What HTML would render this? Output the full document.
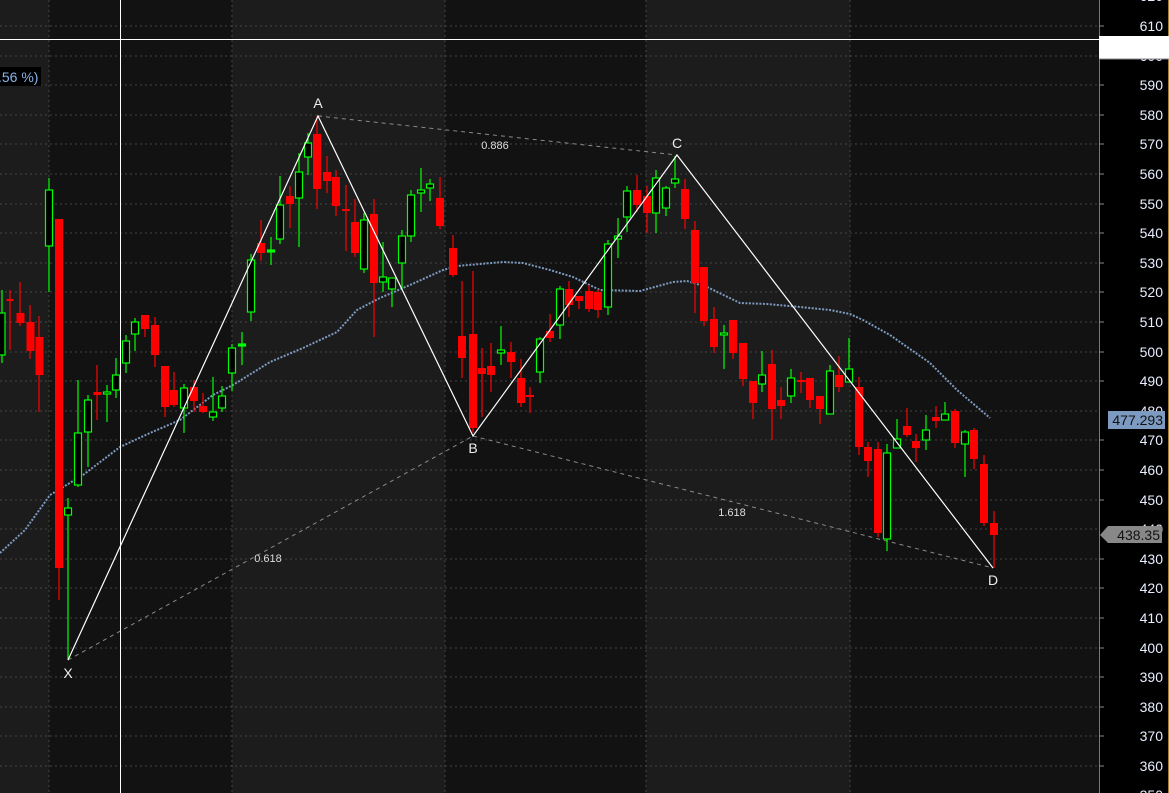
<!DOCTYPE html>
<html><head><meta charset="utf-8"><style>
html,body{margin:0;padding:0;background:#1c1c1c;width:1169px;height:793px;overflow:hidden}
svg{display:block}
text{font-family:"Liberation Sans",sans-serif}
</style></head><body>
<svg width="1169" height="793" viewBox="0 0 1169 793" xmlns="http://www.w3.org/2000/svg">
<rect x="0" y="0" width="1099" height="793" fill="#1c1c1c"/>
<rect x="49" y="0" width="183" height="793" fill="#121212"/>
<rect x="445" y="0" width="201" height="793" fill="#121212"/>
<rect x="850" y="0" width="249" height="793" fill="#121212"/>
<g stroke="#444" stroke-width="1" stroke-dasharray="2,3">
<line x1="0" y1="26" x2="1099" y2="26"/><line x1="0" y1="56" x2="1099" y2="56"/><line x1="0" y1="85" x2="1099" y2="85"/><line x1="0" y1="115" x2="1099" y2="115"/><line x1="0" y1="144" x2="1099" y2="144"/><line x1="0" y1="174" x2="1099" y2="174"/><line x1="0" y1="204" x2="1099" y2="204"/><line x1="0" y1="233" x2="1099" y2="233"/><line x1="0" y1="263" x2="1099" y2="263"/><line x1="0" y1="292" x2="1099" y2="292"/><line x1="0" y1="322" x2="1099" y2="322"/><line x1="0" y1="352" x2="1099" y2="352"/><line x1="0" y1="381" x2="1099" y2="381"/><line x1="0" y1="411" x2="1099" y2="411"/><line x1="0" y1="440" x2="1099" y2="440"/><line x1="0" y1="470" x2="1099" y2="470"/><line x1="0" y1="500" x2="1099" y2="500"/><line x1="0" y1="529" x2="1099" y2="529"/><line x1="0" y1="559" x2="1099" y2="559"/><line x1="0" y1="588" x2="1099" y2="588"/><line x1="0" y1="618" x2="1099" y2="618"/><line x1="0" y1="648" x2="1099" y2="648"/><line x1="0" y1="677" x2="1099" y2="677"/><line x1="0" y1="707" x2="1099" y2="707"/><line x1="0" y1="736" x2="1099" y2="736"/><line x1="0" y1="766" x2="1099" y2="766"/>
<line x1="49" y1="0" x2="49" y2="793"/><line x1="232" y1="0" x2="232" y2="793"/><line x1="445" y1="0" x2="445" y2="793"/><line x1="646" y1="0" x2="646" y2="793"/><line x1="850" y1="0" x2="850" y2="793"/>
</g>
<polyline fill="none" stroke="#7d9ac0" stroke-width="2" stroke-dasharray="2,1.5" points="0,553 25,530 50,495 83,475 120,447 150,433 180,420 213,395 233,385 270,362 303,348 337,332 357,310 380,298 410,285 443,270 457,266 503,262 523,263 550,270 573,277 600,290 640,291 673,282 687,281 707,287 740,303 767,304 800,307 830,310 850,314 863,320 890,335 930,363 957,390 990,418"/>
<g stroke="#8a8a8a" stroke-width="1" stroke-dasharray="4,4" fill="none">
<line x1="68" y1="660" x2="473" y2="436"/><line x1="318" y1="116" x2="677" y2="155"/><line x1="473" y1="436" x2="993" y2="568"/>
</g>
<g stroke-width="1.2">
<line x1="2" y1="290" x2="2" y2="363" stroke="#0f0"/><rect x="-2" y="313" width="7" height="42" fill="#000" stroke="#0f0"/>
<line x1="10" y1="290" x2="10" y2="350" stroke="#f00"/><rect x="6.5" y="299" width="7" height="2" fill="#f00"/>
<line x1="20" y1="282" x2="20" y2="326" stroke="#f00"/><rect x="16.5" y="313" width="8" height="10" fill="#f00"/>
<line x1="30" y1="305" x2="30" y2="359" stroke="#f00"/><rect x="26.5" y="322" width="8" height="29" fill="#f00"/>
<line x1="39" y1="316" x2="39" y2="412" stroke="#f00"/><rect x="35.5" y="337" width="8" height="38" fill="#f00"/>
<line x1="49" y1="178" x2="49" y2="292" stroke="#0f0"/><rect x="45.5" y="190" width="7" height="56" fill="#000" stroke="#0f0"/>
<line x1="59" y1="219" x2="59" y2="600" stroke="#f00"/><rect x="55" y="219" width="8" height="349" fill="#f00"/>
<line x1="68" y1="498" x2="68" y2="660" stroke="#0f0"/><rect x="64.5" y="508" width="7" height="7" fill="#000" stroke="#0f0"/>
<line x1="78" y1="380" x2="78" y2="487" stroke="#0f0"/><rect x="74.5" y="433" width="7" height="52" fill="#000" stroke="#0f0"/>
<line x1="88" y1="395" x2="88" y2="467" stroke="#0f0"/><rect x="84.5" y="400" width="7" height="32" fill="#000" stroke="#0f0"/>
<line x1="97" y1="365" x2="97" y2="420" stroke="#f00"/><rect x="93.5" y="392" width="8" height="3" fill="#f00"/>
<line x1="107" y1="385" x2="107" y2="422" stroke="#0f0"/><rect x="103.5" y="392" width="7" height="2" fill="#000" stroke="#0f0"/>
<line x1="116" y1="358" x2="116" y2="398" stroke="#0f0"/><rect x="112.5" y="375" width="7" height="15" fill="#000" stroke="#0f0"/>
<line x1="126" y1="335" x2="126" y2="373" stroke="#0f0"/><rect x="122.5" y="341" width="7" height="22" fill="#000" stroke="#0f0"/>
<line x1="135" y1="318" x2="135" y2="351" stroke="#0f0"/><rect x="131.5" y="322" width="7" height="12" fill="#000" stroke="#0f0"/>
<line x1="145" y1="315" x2="145" y2="337" stroke="#f00"/><rect x="141" y="315" width="8" height="14" fill="#f00"/>
<line x1="155" y1="317" x2="155" y2="367" stroke="#f00"/><rect x="151" y="325" width="8" height="30" fill="#f00"/>
<line x1="165" y1="366" x2="165" y2="417" stroke="#f00"/><rect x="161" y="366" width="8" height="41" fill="#f00"/>
<line x1="174" y1="372" x2="174" y2="407" stroke="#f00"/><rect x="170" y="390" width="8" height="15" fill="#f00"/>
<line x1="184" y1="384" x2="184" y2="433" stroke="#0f0"/><rect x="180.5" y="388" width="7" height="20" fill="#000" stroke="#0f0"/>
<line x1="194" y1="380" x2="194" y2="412" stroke="#f00"/><rect x="190" y="387" width="8" height="14" fill="#f00"/>
<line x1="203" y1="393" x2="203" y2="413" stroke="#f00"/><rect x="199" y="406" width="8" height="6" fill="#f00"/>
<line x1="213" y1="377" x2="213" y2="421" stroke="#0f0"/><rect x="209.5" y="412" width="7" height="5" fill="#000" stroke="#0f0"/>
<line x1="222" y1="386" x2="222" y2="412" stroke="#0f0"/><rect x="218.5" y="396" width="7" height="12" fill="#000" stroke="#0f0"/>
<line x1="232" y1="344" x2="232" y2="391" stroke="#0f0"/><rect x="228.5" y="348" width="7" height="25" fill="#000" stroke="#0f0"/>
<line x1="242" y1="332" x2="242" y2="365" stroke="#0f0"/><rect x="238.5" y="344" width="7" height="2" fill="#0f0" stroke="#0f0"/>
<line x1="251" y1="254" x2="251" y2="321" stroke="#0f0"/><rect x="247.5" y="260" width="7" height="52" fill="#000" stroke="#0f0"/>
<line x1="261" y1="220" x2="261" y2="261" stroke="#f00"/><rect x="257" y="243" width="8" height="10" fill="#f00"/>
<line x1="271" y1="237" x2="271" y2="265" stroke="#0f0"/><rect x="267.5" y="250" width="7" height="2" fill="#0f0" stroke="#0f0"/>
<line x1="280" y1="176" x2="280" y2="244" stroke="#0f0"/><rect x="276.5" y="205" width="7" height="34" fill="#000" stroke="#0f0"/>
<line x1="290" y1="186" x2="290" y2="228" stroke="#f00"/><rect x="286" y="196" width="8" height="8" fill="#f00"/>
<line x1="299" y1="153" x2="299" y2="247" stroke="#0f0"/><rect x="295.5" y="172" width="7" height="26" fill="#000" stroke="#0f0"/>
<line x1="308" y1="133" x2="308" y2="175" stroke="#0f0"/><rect x="304.5" y="143" width="7" height="14" fill="#000" stroke="#0f0"/>
<line x1="317" y1="116" x2="317" y2="209" stroke="#f00"/><rect x="313" y="134" width="8" height="55" fill="#f00"/>
<line x1="327" y1="156" x2="327" y2="193" stroke="#f00"/><rect x="323" y="172" width="8" height="9" fill="#f00"/>
<line x1="336" y1="170" x2="336" y2="216" stroke="#f00"/><rect x="332" y="177" width="8" height="29" fill="#f00"/>
<line x1="346" y1="185" x2="346" y2="251" stroke="#f00"/><rect x="342" y="209" width="8" height="2" fill="#f00"/>
<line x1="355" y1="199" x2="355" y2="257" stroke="#f00"/><rect x="351" y="222" width="8" height="31" fill="#f00"/>
<line x1="364" y1="213" x2="364" y2="273" stroke="#0f0"/><rect x="360.5" y="220" width="7" height="49" fill="#000" stroke="#0f0"/>
<line x1="374" y1="199" x2="374" y2="337" stroke="#f00"/><rect x="370" y="214" width="8" height="69" fill="#f00"/>
<line x1="383" y1="242" x2="383" y2="292" stroke="#0f0"/><rect x="379.5" y="277" width="7" height="5" fill="#000" stroke="#0f0"/>
<line x1="392" y1="278" x2="392" y2="307" stroke="#0f0"/><rect x="388.5" y="278" width="7" height="11" fill="#000" stroke="#0f0"/>
<line x1="402" y1="230" x2="402" y2="289" stroke="#0f0"/><rect x="398.5" y="236" width="7" height="27" fill="#000" stroke="#0f0"/>
<line x1="411" y1="190" x2="411" y2="242" stroke="#0f0"/><rect x="407.5" y="195" width="7" height="41" fill="#000" stroke="#0f0"/>
<line x1="421" y1="168" x2="421" y2="212" stroke="#0f0"/><rect x="417.5" y="190" width="7" height="3" fill="#000" stroke="#0f0"/>
<line x1="430" y1="179" x2="430" y2="201" stroke="#0f0"/><rect x="426.5" y="184" width="7" height="4" fill="#000" stroke="#0f0"/>
<line x1="440" y1="177" x2="440" y2="229" stroke="#f00"/><rect x="436" y="198" width="8" height="28" fill="#f00"/>
<line x1="453" y1="235" x2="453" y2="277" stroke="#f00"/><rect x="449" y="248" width="8" height="27" fill="#f00"/>
<line x1="462" y1="281" x2="462" y2="378" stroke="#f00"/><rect x="458" y="336" width="8" height="22" fill="#f00"/>
<line x1="473" y1="271" x2="473" y2="433" stroke="#f00"/><rect x="469" y="334" width="8" height="94" fill="#f00"/>
<line x1="482" y1="348" x2="482" y2="417" stroke="#f00"/><rect x="478" y="368" width="8" height="6" fill="#f00"/>
<line x1="491" y1="343" x2="491" y2="392" stroke="#f00"/><rect x="487" y="366" width="8" height="9" fill="#f00"/>
<line x1="501" y1="326" x2="501" y2="365" stroke="#0f0"/><rect x="497.5" y="350" width="7" height="3" fill="#000" stroke="#0f0"/>
<line x1="511" y1="342" x2="511" y2="378" stroke="#f00"/><rect x="507" y="352" width="8" height="10" fill="#f00"/>
<line x1="521" y1="359" x2="521" y2="407" stroke="#f00"/><rect x="517" y="378" width="8" height="25" fill="#f00"/>
<line x1="530" y1="387" x2="530" y2="413" stroke="#f00"/><rect x="526" y="395" width="8" height="2" fill="#f00"/>
<line x1="540" y1="337" x2="540" y2="383" stroke="#0f0"/><rect x="536.5" y="339" width="7" height="33" fill="#000" stroke="#0f0"/>
<line x1="550" y1="314" x2="550" y2="342" stroke="#f00"/><rect x="546" y="331" width="8" height="7" fill="#f00"/>
<line x1="560" y1="286" x2="560" y2="339" stroke="#0f0"/><rect x="556.5" y="289" width="7" height="36" fill="#000" stroke="#0f0"/>
<line x1="569" y1="281" x2="569" y2="317" stroke="#f00"/><rect x="565" y="289" width="8" height="16" fill="#f00"/>
<line x1="579" y1="296" x2="579" y2="309" stroke="#f00"/><rect x="575" y="296" width="8" height="5" fill="#f00"/>
<line x1="589" y1="285" x2="589" y2="312" stroke="#f00"/><rect x="585" y="291" width="8" height="18" fill="#f00"/>
<line x1="598" y1="289" x2="598" y2="318" stroke="#f00"/><rect x="594" y="292" width="8" height="18" fill="#f00"/>
<line x1="608" y1="240" x2="608" y2="315" stroke="#0f0"/><rect x="604.5" y="244" width="7" height="63" fill="#000" stroke="#0f0"/>
<line x1="618" y1="218" x2="618" y2="258" stroke="#0f0"/><rect x="614.5" y="236" width="7" height="3" fill="#000" stroke="#0f0"/>
<line x1="627" y1="186" x2="627" y2="232" stroke="#0f0"/><rect x="623.5" y="191" width="7" height="26" fill="#000" stroke="#0f0"/>
<line x1="637" y1="175" x2="637" y2="212" stroke="#f00"/><rect x="633" y="190" width="8" height="15" fill="#f00"/>
<line x1="647" y1="186" x2="647" y2="233" stroke="#f00"/><rect x="643" y="196" width="8" height="17" fill="#f00"/>
<line x1="656" y1="170" x2="656" y2="233" stroke="#0f0"/><rect x="652.5" y="178" width="7" height="35" fill="#000" stroke="#0f0"/>
<line x1="666" y1="186" x2="666" y2="216" stroke="#0f0"/><rect x="662.5" y="188" width="7" height="20" fill="#000" stroke="#0f0"/>
<line x1="675" y1="156" x2="675" y2="188" stroke="#0f0"/><rect x="671.5" y="179" width="7" height="4" fill="#000" stroke="#0f0"/>
<line x1="685" y1="179" x2="685" y2="229" stroke="#f00"/><rect x="681" y="189" width="8" height="30" fill="#f00"/>
<line x1="695" y1="221" x2="695" y2="313" stroke="#f00"/><rect x="691" y="230" width="8" height="53" fill="#f00"/>
<line x1="704" y1="267" x2="704" y2="326" stroke="#f00"/><rect x="700" y="267" width="8" height="54" fill="#f00"/>
<line x1="714" y1="307" x2="714" y2="353" stroke="#f00"/><rect x="710" y="319" width="8" height="28" fill="#f00"/>
<line x1="724" y1="325" x2="724" y2="369" stroke="#0f0"/><rect x="720.5" y="333" width="7" height="2" fill="#000" stroke="#0f0"/>
<line x1="733" y1="320" x2="733" y2="359" stroke="#f00"/><rect x="729" y="320" width="8" height="33" fill="#f00"/>
<line x1="743" y1="343" x2="743" y2="386" stroke="#f00"/><rect x="739" y="343" width="8" height="36" fill="#f00"/>
<line x1="753" y1="381" x2="753" y2="419" stroke="#f00"/><rect x="749" y="381" width="8" height="22" fill="#f00"/>
<line x1="762" y1="351" x2="762" y2="392" stroke="#0f0"/><rect x="758.5" y="375" width="7" height="9" fill="#000" stroke="#0f0"/>
<line x1="772" y1="350" x2="772" y2="440" stroke="#f00"/><rect x="768" y="364" width="8" height="45" fill="#f00"/>
<line x1="781" y1="387" x2="781" y2="419" stroke="#f00"/><rect x="777" y="400" width="8" height="6" fill="#f00"/>
<line x1="791" y1="369" x2="791" y2="403" stroke="#0f0"/><rect x="787.5" y="378" width="7" height="18" fill="#000" stroke="#0f0"/>
<line x1="801" y1="372" x2="801" y2="393" stroke="#f00"/><rect x="797" y="380" width="8" height="2" fill="#f00"/>
<line x1="810" y1="378" x2="810" y2="408" stroke="#f00"/><rect x="806" y="378" width="8" height="22" fill="#f00"/>
<line x1="820" y1="396" x2="820" y2="424" stroke="#f00"/><rect x="816" y="396" width="8" height="13" fill="#f00"/>
<line x1="830" y1="365" x2="830" y2="414" stroke="#0f0"/><rect x="826.5" y="371" width="7" height="43" fill="#000" stroke="#0f0"/>
<line x1="839" y1="356" x2="839" y2="392" stroke="#f00"/><rect x="835" y="375" width="8" height="12" fill="#f00"/>
<line x1="849" y1="338" x2="849" y2="382" stroke="#0f0"/><rect x="845.5" y="369" width="7" height="13" fill="#000" stroke="#0f0"/>
<line x1="859" y1="377" x2="859" y2="455" stroke="#f00"/><rect x="855" y="387" width="8" height="60" fill="#f00"/>
<line x1="868" y1="442" x2="868" y2="477" stroke="#f00"/><rect x="864" y="447" width="8" height="14" fill="#f00"/>
<line x1="878" y1="442" x2="878" y2="537" stroke="#f00"/><rect x="874" y="449" width="8" height="84" fill="#f00"/>
<line x1="887" y1="444" x2="887" y2="551" stroke="#0f0"/><rect x="883.5" y="453" width="7" height="86" fill="#000" stroke="#0f0"/>
<line x1="897" y1="419" x2="897" y2="448" stroke="#0f0"/><rect x="893.5" y="439" width="7" height="9" fill="#000" stroke="#0f0"/>
<line x1="907" y1="408" x2="907" y2="437" stroke="#f00"/><rect x="903" y="426" width="8" height="9" fill="#f00"/>
<line x1="916" y1="434" x2="916" y2="462" stroke="#f00"/><rect x="912" y="441" width="8" height="7" fill="#f00"/>
<line x1="926" y1="415" x2="926" y2="450" stroke="#0f0"/><rect x="922.5" y="430" width="7" height="10" fill="#000" stroke="#0f0"/>
<line x1="936" y1="406" x2="936" y2="428" stroke="#f00"/><rect x="932" y="417" width="8" height="4" fill="#f00"/>
<line x1="945" y1="402" x2="945" y2="420" stroke="#0f0"/><rect x="941.5" y="414" width="7" height="6" fill="#000" stroke="#0f0"/>
<line x1="955" y1="409" x2="955" y2="448" stroke="#f00"/><rect x="951" y="411" width="8" height="32" fill="#f00"/>
<line x1="965" y1="430" x2="965" y2="477" stroke="#0f0"/><rect x="961.5" y="432" width="7" height="12" fill="#000" stroke="#0f0"/>
<line x1="974" y1="428" x2="974" y2="469" stroke="#f00"/><rect x="970" y="430" width="8" height="29" fill="#f00"/>
<line x1="984" y1="455" x2="984" y2="526" stroke="#f00"/><rect x="980" y="464" width="8" height="59" fill="#f00"/>
<line x1="994" y1="511" x2="994" y2="568" stroke="#f00"/><rect x="990" y="523" width="8" height="12" fill="#f00"/>
</g>
<polyline fill="none" stroke="#fff" stroke-width="1.2" points="68,660 318,116 473,436 677,155 993,568"/>
<g fill="#eee" font-size="14" text-anchor="middle">
<text x="318" y="108">A</text><text x="473" y="453">B</text><text x="677" y="148">C</text><text x="993" y="585">D</text><text x="68" y="678">X</text>
</g>
<g fill="#ddd" font-size="11" text-anchor="middle">
<text x="495" y="149">0.886</text><text x="268" y="562">0.618</text><text x="732" y="516">1.618</text>
</g>
<line x1="120.5" y1="0" x2="120.5" y2="793" stroke="#fff" stroke-width="1"/>
<line x1="0" y1="39.5" x2="1099" y2="39.5" stroke="#fff" stroke-width="1"/>
<rect x="0" y="67" width="41" height="19" fill="#000"/>
<text x="-2" y="82" fill="#8ab4e8" font-size="14">.56 %)</text>
<rect x="1099" y="0" width="70" height="793" fill="#000"/>
<line x1="1099.5" y1="0" x2="1099.5" y2="793" stroke="#777"/>
<line x1="1168.5" y1="0" x2="1168.5" y2="793" stroke="#a08030"/>
<g stroke="#888"><line x1="1099" y1="26" x2="1104" y2="26"/><line x1="1099" y1="85" x2="1104" y2="85"/><line x1="1099" y1="115" x2="1104" y2="115"/><line x1="1099" y1="144" x2="1104" y2="144"/><line x1="1099" y1="174" x2="1104" y2="174"/><line x1="1099" y1="204" x2="1104" y2="204"/><line x1="1099" y1="233" x2="1104" y2="233"/><line x1="1099" y1="263" x2="1104" y2="263"/><line x1="1099" y1="292" x2="1104" y2="292"/><line x1="1099" y1="322" x2="1104" y2="322"/><line x1="1099" y1="352" x2="1104" y2="352"/><line x1="1099" y1="381" x2="1104" y2="381"/><line x1="1099" y1="440" x2="1104" y2="440"/><line x1="1099" y1="470" x2="1104" y2="470"/><line x1="1099" y1="500" x2="1104" y2="500"/><line x1="1099" y1="559" x2="1104" y2="559"/><line x1="1099" y1="588" x2="1104" y2="588"/><line x1="1099" y1="618" x2="1104" y2="618"/><line x1="1099" y1="648" x2="1104" y2="648"/><line x1="1099" y1="677" x2="1104" y2="677"/><line x1="1099" y1="707" x2="1104" y2="707"/><line x1="1099" y1="736" x2="1104" y2="736"/><line x1="1099" y1="766" x2="1104" y2="766"/></g>
<g fill="#e8eeff" font-size="14" text-anchor="end">
<text x="1163" y="1">620</text><text x="1163" y="31">610</text><text x="1163" y="61">600</text><text x="1163" y="90">590</text><text x="1163" y="120">580</text><text x="1163" y="149">570</text><text x="1163" y="179">560</text><text x="1163" y="209">550</text><text x="1163" y="238">540</text><text x="1163" y="268">530</text><text x="1163" y="297">520</text><text x="1163" y="327">510</text><text x="1163" y="357">500</text><text x="1163" y="386">490</text><text x="1163" y="416">480</text><text x="1163" y="445">470</text><text x="1163" y="475">460</text><text x="1163" y="505">450</text><text x="1163" y="534">440</text><text x="1163" y="564">430</text><text x="1163" y="593">420</text><text x="1163" y="623">410</text><text x="1163" y="653">400</text><text x="1163" y="682">390</text><text x="1163" y="712">380</text><text x="1163" y="741">370</text><text x="1163" y="771">360</text><text x="1163" y="800">350</text>
</g>
<rect x="1099" y="36" width="70" height="23" fill="#fff"/>
<line x1="1099" y1="59" x2="1169" y2="59" stroke="#888"/>
<rect x="1108" y="411" width="57" height="18" fill="#7d9ac0"/>
<text x="1163" y="425" fill="#111" font-size="14" text-anchor="end">477.293</text>
<polygon points="1100,535 1108,526 1162,526 1162,543 1108,543" fill="#888"/>
<text x="1160" y="540" fill="#111" font-size="14" text-anchor="end">438.35</text>
</svg>
</body></html>
